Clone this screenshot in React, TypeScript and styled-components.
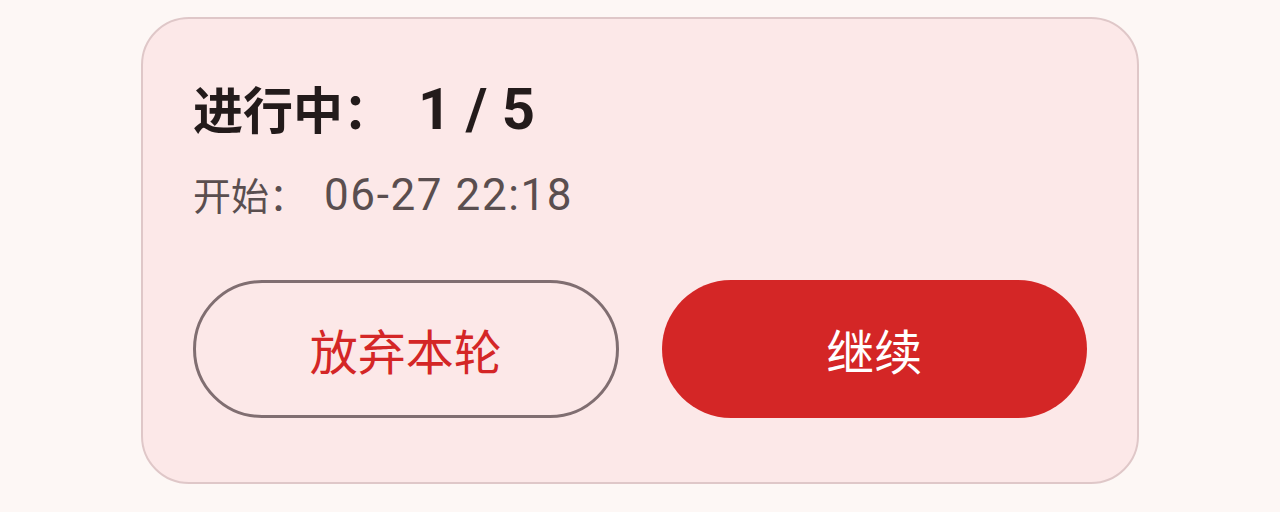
import React from "react";
import styled, { createGlobalStyle } from "styled-components";

const GlobalStyle = createGlobalStyle`
  html, body {
    margin: 0;
    padding: 0;
    background: #fdf7f5;
    font-family: "Noto Sans CJK SC", "Noto Sans", sans-serif;
  }
`;

const Page = styled.div`
  width: 1280px;
  height: 512px;
  padding-top: 17px;
  box-sizing: border-box;
`;

const Card = styled.section`
  width: 998px;
  margin: 0 auto;
  box-sizing: border-box;
  padding: 58px 50px 64px 50px;
  background: #fce8e8;
  border: 2px solid #dfc7c8;
  border-radius: 48px;
  display: flex;
  flex-direction: column;
`;

const Title = styled.h1`
  margin: 0;
  font-size: 50px;
  line-height: 60px;
  height: 60px;
  font-weight: 700;
  color: #231b1b;
  white-space: nowrap;
`;

const Started = styled.div`
  margin-top: 32px;
  font-size: 38px;
  line-height: 50px;
  height: 50px;
  color: #5a4e4f;
  white-space: nowrap;
`;

// digits in the reference come from a font with taller figures, so they get their own size
const Num = styled.span<{ $size: number; $gap: number; $track?: number }>`
  font-family: "Roboto", "Noto Sans", sans-serif;
  font-size: ${(p) => p.$size}px;
  line-height: 1;
  margin-left: ${(p) => p.$gap}px;
  letter-spacing: ${(p) => p.$track ?? 0}px;
`;

const Actions = styled.div`
  margin-top: 61px;
  display: grid;
  grid-template-columns: 1fr 1fr;
  gap: 43px;
`;

const Button = styled.button<{ $primary?: boolean }>`
  height: 138px;
  border-radius: 69px;
  font-family: inherit;
  font-size: 48px;
  font-weight: 400;
  cursor: pointer;
  box-sizing: border-box;
  border: ${(p) => (p.$primary ? "none" : "3px solid #806e71")};
  background: ${(p) => (p.$primary ? "#d42626" : "transparent")};
  color: ${(p) => (p.$primary ? "#ffffff" : "#d42626")};
`;

export default function App() {
  return (
    <Page>
      <GlobalStyle />
      <Card>
        <Title>
          进行中：<Num $size={58} $gap={25}>1 / 5</Num>
        </Title>
        <Started>
          开始：<Num $size={44} $gap={17} $track={1.6}>06-27 22:18</Num>
        </Started>
        <Actions>
          <Button>放弃本轮</Button>
          <Button $primary>继续</Button>
        </Actions>
      </Card>
    </Page>
  );
}
